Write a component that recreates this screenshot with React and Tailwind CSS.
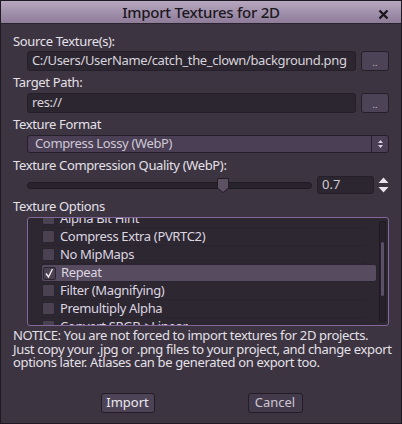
import React from "react";

const font = { fontFamily: '"Noto Sans", "Open Sans", sans-serif' };

function Check({ checked }) {
  return (
    <span className="flex h-[13px] w-[13px] shrink-0 items-center justify-center rounded-[2px] border border-[#2a2430] bg-[#4a4250]">
      {checked ? (
        <svg width="11" height="11" viewBox="0 0 11 11">
          <path d="M2 5.5 L4.5 9 L8.5 1" fill="none" stroke="#f2eef4" strokeWidth="1.4" />
        </svg>
      ) : null}
    </span>
  );
}

function Label({ children, className = "" }) {
  return (
    <div className={`h-[18px] pl-[12px] text-[13px] leading-[18px] tracking-[-0.35px] text-[#e4e0e8] ${className}`}>
      {children}
    </div>
  );
}

function PathRow({ value, className = "" }) {
  return (
    <div className={`flex h-[20px] pl-[26px] pr-[12px] ${className}`}>
      <div className="flex min-w-0 flex-1 items-center overflow-hidden whitespace-nowrap rounded-[3px] border border-[#241f28] bg-[#2c2630] px-[4px] text-[13px] tracking-[-0.35px] text-[#d8d3dc]">
        {value}
      </div>
      <div className="ml-[5px] flex w-[28px] shrink-0 items-end justify-center rounded-[3px] border border-[#241f28] bg-[#4d4356] pb-[3px] text-[9px] leading-none text-[#cfc8d4]">
        ..
      </div>
    </div>
  );
}

const options = [
  { label: "Alpha Bit Hint" },
  { label: "Compress Extra (PVRTC2)" },
  { label: "No MipMaps" },
  { label: "Repeat", checked: true, selected: true },
  { label: "Filter (Magnifying)" },
  { label: "Premultiply Alpha" },
  { label: "Convert SRGB->Linear" },
];

export default function App() {
  return (
    <div className="h-[424px] w-[402px] overflow-hidden" style={font}>
      <div className="flex h-full flex-col border border-[#1f1a22] bg-[#3c3441]">
        <div className="relative flex h-[23px] shrink-0 items-center justify-center border-b border-[#2a2430] bg-gradient-to-b from-[#b7a7c0] to-[#8e7c99]">
          <span className="text-[15px] font-medium tracking-[-0.25px] text-[#1c1820]">Import Textures for 2D</span>
          <svg className="absolute right-[12px] top-[8px]" width="11" height="11" viewBox="0 0 11 11">
            <path d="M1.5 1.5 L9.5 9.5 M9.5 1.5 L1.5 9.5" stroke="#1a161d" strokeWidth="2.4" />
          </svg>
        </div>

        <Label className="mt-[8px]">Source Texture(s):</Label>
        <PathRow className="mt-[1px]" value="C:/Users/UserName/catch_the_clown/background.png" />
        <Label className="mt-[2px]">Target Path:</Label>
        <PathRow className="mt-[2px]" value="res://" />

        <Label className="mt-[2px]">Texture Format</Label>
        <div className="mt-[2px] flex h-[18px] pl-[26px] pr-[12px]">
          <div className="flex flex-1 items-center rounded-[3px] border border-[#241f28] bg-[#4a3f54]">
            <span className="flex-1 pl-[7px] text-[13px] tracking-[-0.35px] text-[#d0c8d6]">Compress Lossy (WebP)</span>
            <div className="flex h-full w-[17px] items-center justify-center border-l border-[#241f28]">
              <svg width="7" height="10" viewBox="0 0 7 10">
                <path d="M3.5 1 L6 4 L1 4 Z M3.5 9 L6 6 L1 6 Z" fill="#d8d0dc" />
              </svg>
            </div>
          </div>
        </div>

        <Label className="mt-[3px]">Texture Compression Quality (WebP):</Label>
        <div className="mt-[2px] flex h-[18px] items-center pl-[26px] pr-[12px]">
          <div className="relative h-[7px] flex-1 rounded-full border border-[#1e1a22] bg-[#29232d]">
            <svg className="absolute left-[188px] top-[-6px]" width="14" height="17" viewBox="0 0 14 17">
              <path d="M1.5 1.5 H12.5 V11 L7 15.5 L1.5 11 Z" fill="#5b5162" stroke="#221d26" strokeWidth="1" />
            </svg>
          </div>
          <div className="ml-[5px] flex h-[18px] w-[57px] items-center rounded-[3px] border border-[#241f28] bg-[#2c2630] px-[4px] text-[13px] text-[#d0cad4]">
            0.7
          </div>
          <svg className="ml-[4px]" width="11" height="16" viewBox="0 0 11 16">
            <path d="M5.5 0.5 L10.5 6 L0.5 6 Z M5.5 15.5 L10.5 10 L0.5 10 Z" fill="#e8e4ec" />
          </svg>
        </div>

        <Label className="mt-[3px]">Texture Options</Label>
        <div className="mt-[2px] flex h-[109px] pl-[26px] pr-[12px]">
          <div className="flex flex-1 overflow-hidden rounded-[3px] border border-[#84679a] bg-[#2d2732]">
            <div className="mt-[-8px] flex flex-1 flex-col">
              {options.map((o) => (
                <div
                  key={o.label}
                  className={`mx-[13px] flex h-[18px] shrink-0 items-center gap-[5px] pl-[1px] text-[13px] tracking-[-0.35px] text-[#dcd6e0] ${
                    o.selected
                      ? "mr-[2px] rounded-[3px] border border-[#2a2430] bg-[#574c5f]"
                      : "border-b border-[#29242d]"
                  }`}
                >
                  <Check checked={o.checked} />
                  <span>{o.label}</span>
                </div>
              ))}
            </div>
            <div className="my-[3px] mr-[2px] w-[7px] shrink-0 rounded-[2px] border border-[#1e1a22] bg-[#26212a] px-[1px] pt-[20px]">
              <div className="h-[54px] rounded-[2px] bg-[#5c4f68]" />
            </div>
          </div>
        </div>

        <div className="mt-[3px] whitespace-nowrap pl-[12px] text-[13px] leading-[13.5px] tracking-[-0.35px] text-[#e4e0e8]">
          NOTICE: You are not forced to import textures for 2D projects.
          <br />
          Just copy your .jpg or .png files to your project, and change export
          <br />
          options later. Atlases can be generated on export too.
        </div>

        <div className="mt-[23px] flex justify-center gap-[93px] pl-[1px]">
          <div className="flex h-[20px] w-[54px] items-center justify-center rounded-[3px] border border-[#221d26] bg-[#4d4356] text-[13px] text-[#ece8ef]">
            Import
          </div>
          <div className="flex h-[20px] w-[55px] items-center justify-center rounded-[3px] border border-[#221d26] bg-[#433a4b] text-[13px] text-[#cdc6d2]">
            Cancel
          </div>
        </div>
      </div>
    </div>
  );
}
